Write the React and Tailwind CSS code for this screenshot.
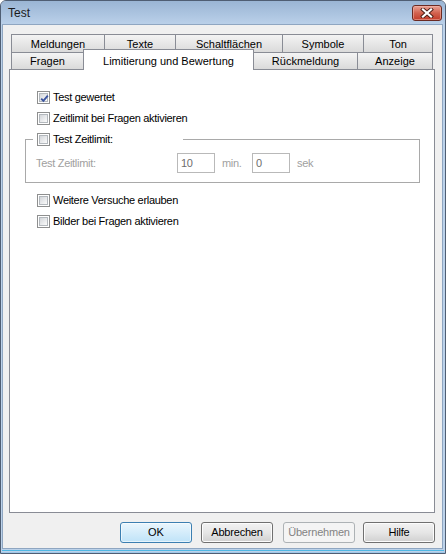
import React from "react";

// Win7-Basic-Dialog "Test", Reiter "Limitierung und Bewertung"

function Checkbox({ checked }) {
  return (
    <span className="flex w-[13px] h-[13px] shrink-0 border border-[#8e8f8f] bg-white p-px">
      <span className="relative block w-full h-full border border-[#b3b8bd] bg-gradient-to-br from-[#d3d6da] to-[#fbfbfb]">
        {checked && (
          <svg width="11" height="11" viewBox="0 0 11 11" className="absolute -left-[1px] -top-[1px]">
            <path d="M2.2 5.6 L4.4 7.9 L8.8 2.6" fill="none" stroke="#3d56a0" strokeWidth="1.9" />
          </svg>
        )}
      </span>
    </span>
  );
}

function CheckRow({ label, checked }) {
  return (
    <div className="flex h-[21px] items-center gap-[3px] pl-[12px]">
      <Checkbox checked={checked} />
      <span>{label}</span>
    </div>
  );
}

function Tab({ w, label, first }) {
  return (
    <div
      className={
        "flex h-full items-center justify-center border border-b-0 border-[#898c95] bg-gradient-to-b from-[#f4f4f4] to-[#dadada] pt-px " +
        w +
        (first ? "" : " -ml-px")
      }
    >
      {label}
    </div>
  );
}

function Button({ label, variant }) {
  if (variant === "default") {
    return (
      <button className="h-[21px] w-[72px] rounded-[3px] border border-[#3c7fb1] bg-gradient-to-b from-[#eaf6fd] to-[#bfe3f8] text-black shadow-[inset_0_0_0_1px_#ffffff99]">
        {label}
      </button>
    );
  }
  if (variant === "disabled") {
    return (
      <button className="h-[21px] w-[72px] rounded-[3px] border border-[#adb2b5] bg-[#f4f4f4] text-[#838383] tracking-[-0.2px]">
        {label}
      </button>
    );
  }
  return (
    <button className="h-[21px] w-[72px] rounded-[3px] border border-[#707070] bg-gradient-to-b from-[#f2f2f2] via-[#e6e6e6] to-[#d0d0d0] text-black shadow-[inset_0_0_0_1px_#fcfcfc] tracking-[-0.2px]">
      {label}
    </button>
  );
}

export default function App() {
  return (
    <div className="w-[446px] h-[554px] flex flex-col overflow-hidden rounded-t-[6px] border border-[#4f5e73] bg-[#bcd2ea] font-['Liberation_Sans',Arial,sans-serif] text-[11px] text-black">
      {/* Titelleiste */}
      <div className="flex h-[23px] shrink-0 items-center justify-between bg-gradient-to-b from-[#9ab5d4] to-[#bad0e9] pl-[7px] pr-[3px]">
        <span className="text-[12px] text-[#1b1b1b]">Test</span>
        <div className="flex h-[16px] w-[30px] items-center justify-center rounded-[3px] border border-[#6b2a22] bg-gradient-to-b from-[#e9a295] via-[#d2624f] to-[#c23a28] shadow-[inset_0_0_0_1px_#f1b9ae88]">
          <svg width="14" height="10" viewBox="0 0 14 10">
            <path d="M3 1.5 L11 8.5 M11 1.5 L3 8.5" stroke="#4a1d16" strokeWidth="4" strokeLinecap="square" />
            <path d="M3 1.5 L11 8.5 M11 1.5 L3 8.5" stroke="#ffffff" strokeWidth="2.2" strokeLinecap="square" />
          </svg>
        </div>
      </div>

      {/* Client-Bereich */}
      <div className="flex-1 flex flex-col ml-[1px] mr-[2px] mb-[1px] border border-[#8fa6c1] bg-[#f0f0f0] pt-[9px] pl-[6px] pr-[7px]">
        {/* Reiter */}
        <div className="ml-[2px] flex h-[18px] w-[422px]">
          <Tab w="w-[94px]" label="Meldungen" first />
          <Tab w="w-[72px]" label="Texte" />
          <Tab w="w-[108px]" label="Schaltflächen" />
          <Tab w="w-[82px]" label="Symbole" />
          <Tab w="w-[70px]" label="Ton" />
        </div>
        <div className="ml-[2px] flex h-[17px] w-[422px] items-end">
          <div className="flex h-[17px] w-[73px] items-center justify-center border border-b-0 border-[#898c95] bg-gradient-to-b from-[#f4f4f4] to-[#dadada] pt-px">
            Fragen
          </div>
          <div className="relative z-10 -mb-px -ml-px flex h-[21px] w-[171px] items-start justify-center border border-b-0 border-[#898c95] bg-white pt-[3px]">
            Limitierung und Bewertung
          </div>
          <div className="-ml-px flex h-[17px] w-[105px] items-center justify-center border border-b-0 border-[#898c95] bg-gradient-to-b from-[#f4f4f4] to-[#dadada] pt-px">
            Rückmeldung
          </div>
          <div className="-ml-px flex h-[17px] w-[76px] items-center justify-center border border-b-0 border-[#898c95] bg-gradient-to-b from-[#f4f4f4] to-[#dadada] pt-px">
            Anzeige
          </div>
        </div>

        {/* Reiterinhalt */}
        <div className="h-[444px] w-[426px] border border-[#898c95] bg-white pt-[17px] pl-[15px] pr-[15px] tracking-[-0.3px]">
          <CheckRow label="Test gewertet" checked />
          <CheckRow label="Zeitlimit bei Fragen aktivieren" />

          <div className="relative mt-[10px] h-[44px] w-[395px] border border-[#a9a9a9]">
            <div className="absolute -top-[11px] left-[7px] flex h-[21px] w-[150px] items-center gap-[3px] bg-white pl-[4px]">
              <Checkbox />
              <span>Test Zeitlimit:</span>
            </div>
            <div className="flex items-center pt-[13px] pl-[10px] text-[#a0a0a0]">
              <span className="w-[141px]">Test Zeitlimit:</span>
              <div className="flex h-[20px] w-[38px] items-center border border-[#b9b9b9] bg-white pl-[3px] text-[#6d6d6d]">10</div>
              <span className="ml-[7px] w-[30px]">min.</span>
              <div className="flex h-[20px] w-[38px] items-center border border-[#b9b9b9] bg-white pl-[3px] text-[#6d6d6d]">0</div>
              <span className="ml-[7px]">sek</span>
            </div>
          </div>

          <div className="mt-[7px]">
            <CheckRow label="Weitere Versuche erlauben" />
            <CheckRow label="Bilder bei Fragen aktivieren" />
          </div>
        </div>

        {/* Schaltflächen */}
        <div className="mt-[9px] flex w-[426px] justify-end">
          <Button label="OK" variant="default" />
          <div className="ml-[9px]"><Button label="Abbrechen" /></div>
          <div className="ml-[10px]"><Button label="Übernehmen" variant="disabled" /></div>
          <div className="ml-[8px]"><Button label="Hilfe" /></div>
        </div>
      </div>
      {/* unterer Rahmen */}
      <div className="mx-[1px] mb-[1px] h-[1px] shrink-0 bg-[#4fb8e4]" />
      <div className="h-[1px] shrink-0 bg-[#9fc6e6]" />
    </div>
  );
}
